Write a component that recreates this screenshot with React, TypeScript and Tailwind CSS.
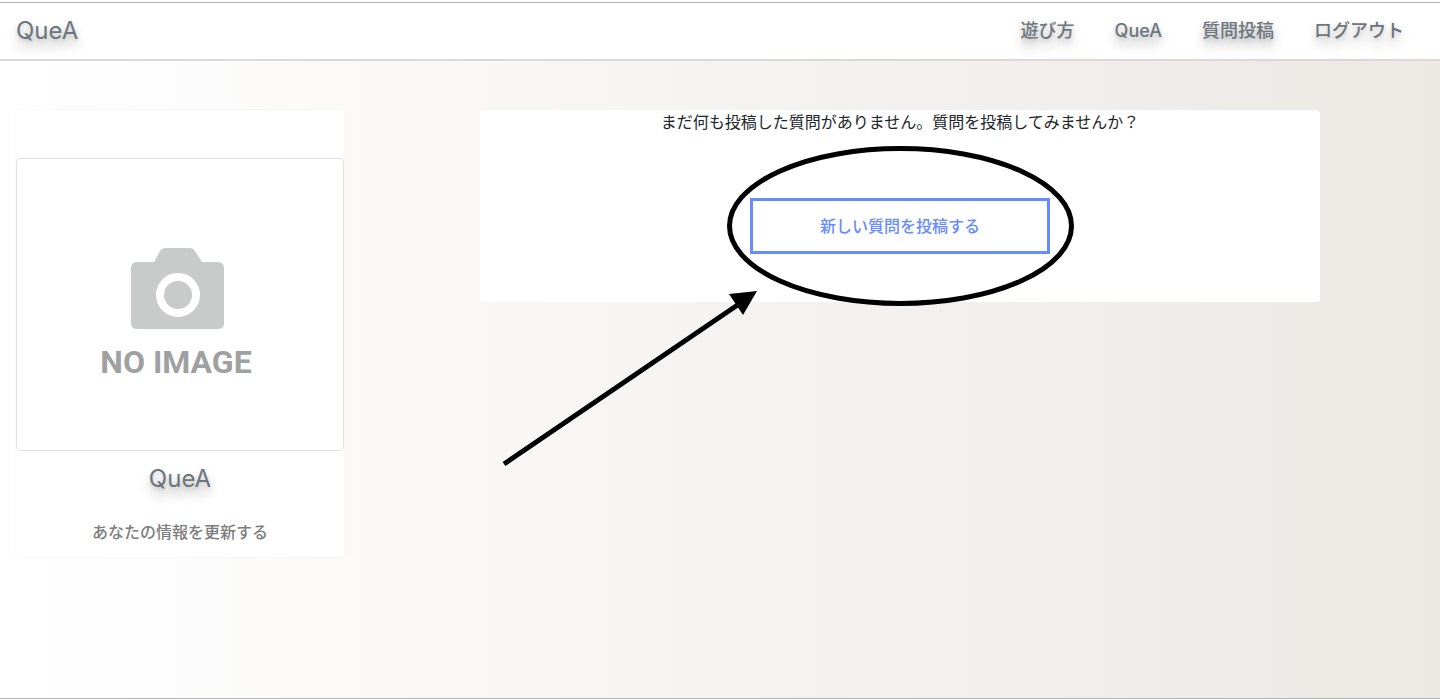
const navItems = ["遊び方", "QueA", "質問投稿", "ログアウト"];

const softShadow =
  "[text-shadow:0_2px_4px_rgba(0,0,0,0.15),0_8px_12px_rgba(0,0,0,0.28)]";

function Header() {
  return (
    <header className="flex h-[59px] items-center justify-between border-t border-b-2 border-t-[#b4b4b4] border-b-[#d9d9d9] bg-white pr-9 pl-4 text-[#6c757d]">
      <a href="#home" className={`text-2xl ${softShadow}`}>
        QueA
      </a>
      <nav className="flex gap-10 text-lg font-medium">
        {navItems.map((label) => (
          <a key={label} href={`#${label}`} className={softShadow}>
            {label}
          </a>
        ))}
      </nav>
    </header>
  );
}

function ProfileImage() {
  return (
    <div className="flex h-[293px] flex-col items-center justify-center gap-3 rounded border border-[#dee2e6] bg-white pt-5 pr-1">
      <svg width="94" height="82" viewBox="0 0 94 82" aria-hidden="true">
        <path
          d="M6 14H23L29 3Q31 0 34 0H59Q62 0 64 3L71 14H87Q93 14 93 20V75Q93 81 87 81H6Q0 81 0 75V20Q0 14 6 14Z"
          fill="#c9cbca"
        />
        <circle cx="47" cy="47" r="18" fill="#c9cbca" stroke="#fff" strokeWidth="8" />
      </svg>
      <span className="pr-1 font-[Roboto,sans-serif] text-[32px] leading-10 font-bold text-[#9fa1a0]">
        NO IMAGE
      </span>
    </div>
  );
}

function Profile() {
  return (
    <aside className="w-1/4 px-4">
      <div className="flex flex-col rounded bg-white pt-12 text-center ring-1 ring-black/2">
        <ProfileImage />
        <h2 className={`pt-3 text-2xl leading-8 text-[#6c757d] ${softShadow}`}>QueA</h2>
        <a href="#profile" className="pt-[25px] pb-[13px] text-base font-medium text-[#7d7d7d]">
          あなたの情報を更新する
        </a>
      </div>
    </aside>
  );
}

function Annotation() {
  return (
    <svg
      className="pointer-events-none absolute -top-14 -right-[26px] max-w-none"
      width="576"
      height="328"
      viewBox="500 142 576 328"
      fill="none"
      aria-hidden="true"
    >
      <ellipse cx="900.5" cy="226" rx="171" ry="77.5" stroke="#000" strokeWidth="5" />
      <path d="M504 464L739 304" stroke="#000" strokeWidth="5" />
      <path d="M757 291L729 294L743 315Z" fill="#000" />
    </svg>
  );
}

function Questions() {
  return (
    <main className="w-3/4 px-30">
      <section className="flex flex-col items-center rounded bg-white pb-12 text-[#212529]">
        <p className="text-center text-base">
          まだ何も投稿した質問がありません。質問を投稿してみませんか？
        </p>
        <div className="relative mt-16">
          <button
            type="button"
            className="h-14 w-[300px] border-3 border-[#668cff] bg-white text-base font-medium text-[#668cff]"
          >
            新しい質問を投稿する
          </button>
          <Annotation />
        </div>
      </section>
    </main>
  );
}

export default function App() {
  return (
    <div
      lang="ja"
      className="min-h-screen border-b border-[#b4b4b4] bg-[linear-gradient(to_right,#ffffff,#ece8e4)] font-[Inter,'Noto_Sans_CJK_JP',sans-serif]"
    >
      <div className="bg-white pt-0.5">
        <Header />
      </div>
      <div className="flex items-start pt-[49px]">
        <Profile />
        <Questions />
      </div>
    </div>
  );
}
